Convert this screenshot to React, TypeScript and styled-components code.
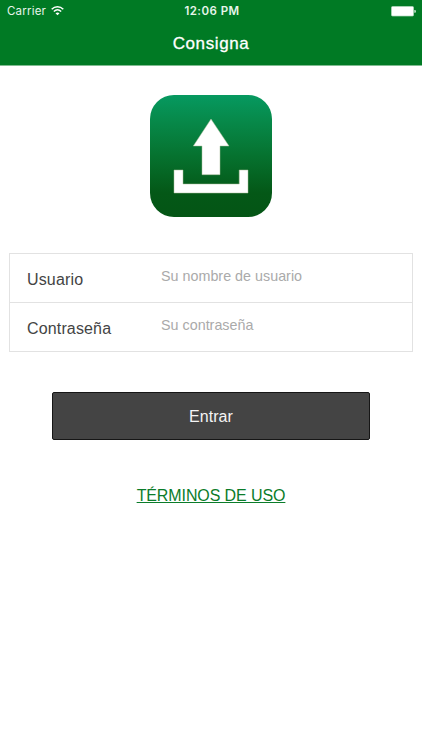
import React from "react";
import styled, { createGlobalStyle } from "styled-components";

const GlobalStyle = createGlobalStyle`
  * { box-sizing: border-box; }
  body {
    margin: 0;
    background: #fff;
    font-family: "Liberation Sans", Arial, Helvetica, sans-serif;
    -webkit-font-smoothing: antialiased;
  }
`;

const Screen = styled.div`
  width: 422px;
  height: 750px;
  overflow: hidden;
  background: #fff;
`;

const Header = styled.header`
  height: 66px;
  background: #007a24;
  border-bottom: 1px solid #80bc91;
  color: #fff;
`;

const StatusBar = styled.div`
  display: grid;
  grid-template-columns: 1fr auto 1fr;
  align-items: center;
  height: 22px;
  padding: 0 6px 0 7px;
  font-family: Inter, "Liberation Sans", sans-serif;
  font-size: 11.5px;
  line-height: 22px;
`;

const Carrier = styled.div`
  display: flex;
  align-items: center;
  gap: 5px;
  color: #e6f5ea;
  letter-spacing: 0.2px;
`;

const Clock = styled.time`
  padding-left: 1px;
  font-weight: 600;
  letter-spacing: 0.45px;
  color: #e6f5ea;
`;

const BatterySlot = styled.div`
  display: flex;
  justify-content: flex-end;
`;

const Title = styled.h1`
  margin: 0;
  padding-top: 11px;
  text-align: center;
  font-size: 17px;
  font-weight: 400;
  line-height: 22px;
  letter-spacing: 0.6px;
  -webkit-text-stroke: 0.3px #fff;
`;

const Content = styled.main`
  display: flex;
  flex-direction: column;
  align-items: center;
  padding-top: 29px;
`;

const Form = styled.form`
  display: flex;
  flex-direction: column;
  align-items: center;
  width: 100%;
  margin-top: 36px;
`;

const Fields = styled.div`
  width: 404px;
  height: 99px;
  border: 1px solid #e2e2e2;
`;

const Field = styled.label`
  display: grid;
  grid-template-columns: 134px 1fr;
  height: 48px;
  padding-left: 17px;

  & + & {
    height: 49px;
    border-top: 1px solid #e2e2e2;
  }
`;

const FieldName = styled.span`
  padding-top: 16px;
  font-size: 16px;
  line-height: 20px;
  letter-spacing: 0.15px;
  color: #444;
`;

const Input = styled.input`
  width: 100%;
  height: 44px;
  padding: 0;
  border: 0;
  outline: 0;
  background: transparent;
  font-family: inherit;
  font-size: 14.3px;
  letter-spacing: 0.02px;
  color: #444;

  &::placeholder {
    color: #aaa;
    opacity: 1;
  }
`;

const SubmitButton = styled.button`
  width: 318px;
  height: 48px;
  margin-top: 40px;
  padding: 2px 0 0 0;
  border: 1px solid #161616;
  border-radius: 2px;
  background: #444;
  color: #f4f4f4;
  font-family: inherit;
  font-size: 16px;
  letter-spacing: 0.05px;
`;

const TermsLink = styled.a`
  margin-top: 46px;
  font-size: 16px;
  line-height: 20px;
  letter-spacing: -0.1px;
  color: #0b7c2a;
  text-decoration: underline;
  text-decoration-thickness: 1px;
  text-underline-offset: 1px;
`;

function WifiIcon() {
  return (
    <svg width="13" height="10" viewBox="0 0 13 10" fill="none" stroke="#fff">
      <path d="M.7 3.25C4-.05 9-.05 12.3 3.25" strokeWidth="1.5" />
      <path d="M2.8 5.45c2.2-2.1 5.2-2.1 7.4 0" strokeWidth="1.4" />
      <path d="M4.5 7.35c1.2-1.1 2.8-1.1 4 0l-2 2z" fill="#fff" stroke="none" />
    </svg>
  );
}

function BatteryIcon() {
  return (
    <svg width="25" height="11" viewBox="0 0 25 11">
      <rect x=".5" y=".5" width="22" height="9.5" rx="1" fill="#fff" stroke="#b5dbc0" strokeWidth=".7" />
      <path d="M23.4 4h.6q.8 0 .8 1.4T24 6.8h-.6z" fill="#e0f2e5" />
    </svg>
  );
}

function AppLogo() {
  return (
    <svg width="122" height="122" viewBox="0 0 122 122" role="img" aria-label="Consigna">
      <defs>
        <linearGradient id="logo-fill" x1="0" y1="0" x2="0" y2="1">
          <stop offset="0" stopColor="#069960" />
          <stop offset=".2" stopColor="#078a4b" />
          <stop offset=".5" stopColor="#06722f" />
          <stop offset=".8" stopColor="#045817" />
          <stop offset="1" stopColor="#045515" />
        </linearGradient>
      </defs>
      <rect width="122" height="122" rx="24" fill="url(#logo-fill)" />
      <g fill="#fff" stroke="#a9bd98" strokeWidth=".5">
        <path d="M61 24 79 51H70V79.7H52V51H43.3Z" />
        <path d="M24 75H33V89H89.2V75H98V98H24Z" />
      </g>
    </svg>
  );
}

export default function App() {
  return (
    <Screen>
      <GlobalStyle />
      <Header>
        <StatusBar>
          <Carrier>
            Carrier
            <WifiIcon />
          </Carrier>
          <Clock>12:06 PM</Clock>
          <BatterySlot>
            <BatteryIcon />
          </BatterySlot>
        </StatusBar>
        <Title>Consigna</Title>
      </Header>
      <Content>
        <AppLogo />
        <Form onSubmit={(event) => event.preventDefault()}>
          <Fields>
            <Field>
              <FieldName>Usuario</FieldName>
              <Input type="text" placeholder="Su nombre de usuario" />
            </Field>
            <Field>
              <FieldName>Contraseña</FieldName>
              <Input type="password" placeholder="Su contraseña" />
            </Field>
          </Fields>
          <SubmitButton type="submit">Entrar</SubmitButton>
        </Form>
        <TermsLink href="#terminos">TÉRMINOS DE USO</TermsLink>
      </Content>
    </Screen>
  );
}
